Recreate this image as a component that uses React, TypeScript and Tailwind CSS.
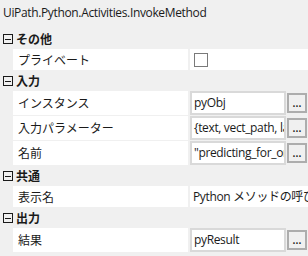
import React from "react";

const font = { fontFamily: '"Noto Sans CJK JP", "Noto Sans", sans-serif' };
const latin = { fontFamily: '"Open Sans", "Noto Sans CJK JP", sans-serif', letterSpacing: "-0.35px" };

function Collapse() {
  return (
    <div className="w-[13px] shrink-0 flex items-center justify-start pl-[3px]">
      <div className="w-[10px] h-[10px] border border-[#1a1a1a] flex items-center justify-center">
        <div className="w-[6px] h-px bg-[#1a1a1a]" />
      </div>
    </div>
  );
}

function Header({ title }: { title: string }) {
  return (
    <div className="flex h-[20px] items-center">
      <Collapse />
      <div className="pl-[3px] text-[12px] font-bold text-[#1a1a1a] leading-none">{title}</div>
    </div>
  );
}

function Label({ text }: { text: string }) {
  return (
    <div className="w-[175px] shrink-0 bg-white flex items-center pl-[5px] text-[12px] text-[#1a1a1a] leading-none whitespace-nowrap overflow-hidden">
      {text}
    </div>
  );
}

function PlainRow({ label, children }: { label: string; children: React.ReactNode }) {
  return (
    <div className="flex h-[21px] mb-px">
      <div className="w-[13px] shrink-0" />
      <Label text={label} />
      <div className="w-[2px] shrink-0" />
      <div className="w-[118px] shrink-0 bg-white flex items-center overflow-hidden whitespace-nowrap">{children}</div>
    </div>
  );
}

function InputRow({ label, value }: { label: string; value: string }) {
  return (
    <div className="flex h-[24px] mb-px">
      <div className="w-[13px] shrink-0" />
      <Label text={label} />
      <div className="w-[2px] shrink-0" />
      <div className="w-[118px] shrink-0 flex items-center">
        <div
          className="h-[24px] w-[96px] shrink-0 border-2 border-[#d9d9d9] bg-white flex items-center pl-[2px] text-[12px] text-[#1a1a1a] overflow-hidden whitespace-nowrap leading-none"
          style={latin}
        >
          {value}
        </div>
        <div className="ml-px w-[20px] h-[20px] shrink-0 border-2 border-[#adadad] bg-[#f0f0f0] flex items-end justify-center pb-[3px] text-[9px] leading-none text-[#1a1a1a] font-bold">
          ...
        </div>
      </div>
    </div>
  );
}

export default function App() {
  return (
    <div className="w-[308px] h-[256px] bg-[#f0f0f0] overflow-hidden" style={font}>
      <div className="h-[29px] flex items-center pl-[3px] pb-[3px] text-[12px] text-[#1a1a1a]" style={latin}>
        UiPath.Python.Activities.InvokeMethod
      </div>
      <Header title="その他" />
      <PlainRow label="プライベート">
        <div className="ml-[4px] w-[14px] h-[14px] border border-[#7a7a7a] bg-white" />
      </PlainRow>
      <Header title="入力" />
      <InputRow label="インスタンス" value="pyObj" />
      <InputRow label="入力パラメーター" value="{text, vect_path, labels_path}" />
      <InputRow label="名前" value={'"predicting_for_one"'} />
      <Header title="共通" />
      <PlainRow label="表示名">
        <span className="pl-[3px] text-[12px] text-[#1a1a1a] leading-none" style={latin}>
          Python メソッドの呼び出し
        </span>
      </PlainRow>
      <Header title="出力" />
      <InputRow label="結果" value="pyResult" />
    </div>
  );
}
